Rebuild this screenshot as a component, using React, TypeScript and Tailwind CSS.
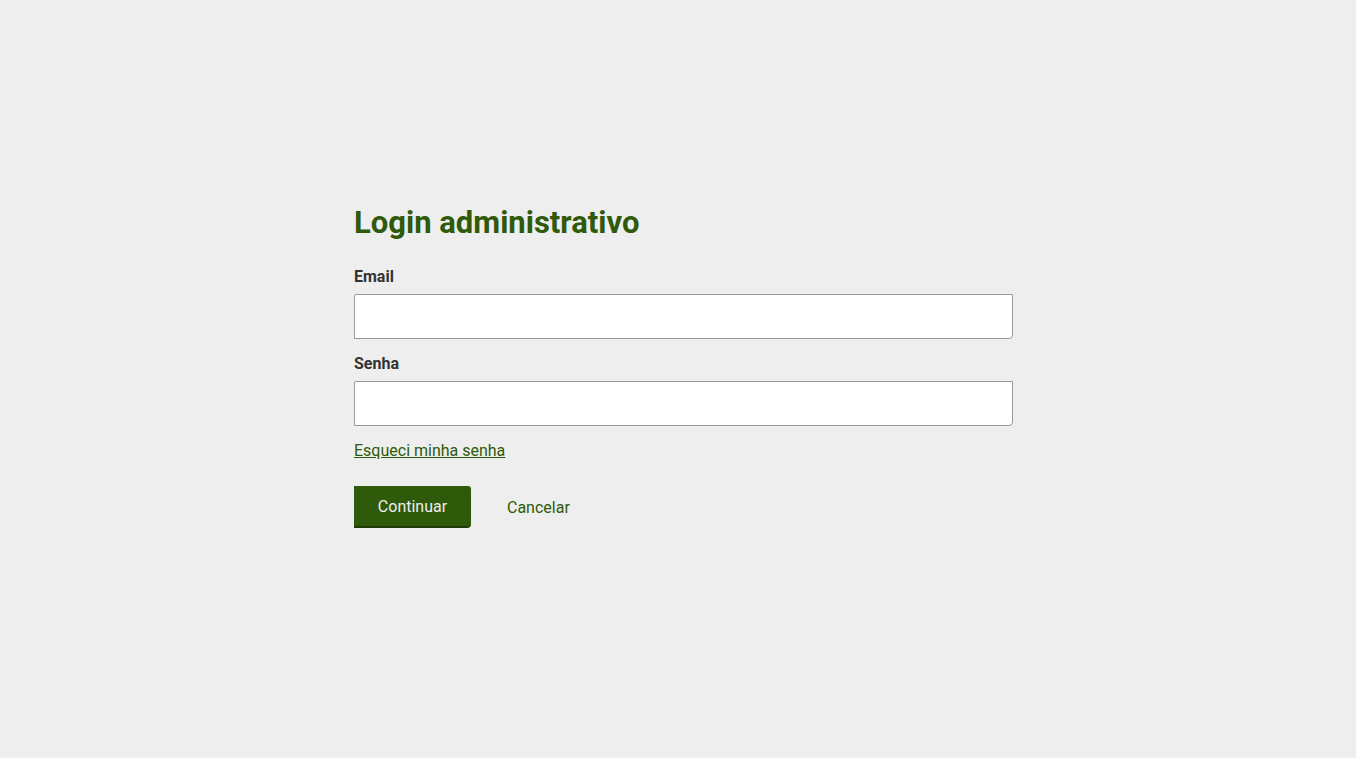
import React, { useState } from 'react';

const App = () => {
  const [email, setEmail] = useState('');
  const [senha, setSenha] = useState('');

  return (
    <div
      className="min-h-[758px] w-full bg-[#eeeeee] pt-[204px] pl-[354px]"
      style={{ fontFamily: 'Roboto, "Liberation Sans", sans-serif' }}
    >
      <form className="w-[659px]" onSubmit={(e) => e.preventDefault()}>
        <h1 className="text-[31px] font-bold leading-[38px] text-[#2f5a0a]">Login administrativo</h1>

        <label className="mt-[23px] block text-[16px] font-bold leading-[24px] text-[#333333]" htmlFor="email">
          Email
        </label>
        <input
          id="email"
          type="email"
          value={email}
          onChange={(e) => setEmail(e.target.value)}
          className="mt-[5px] block h-[45px] w-full rounded-tl-[2px] rounded-br-[4px] border border-[#999999] bg-white px-3 outline-none"
        />

        <label className="mt-[13px] block text-[16px] font-bold leading-[24px] text-[#333333]" htmlFor="senha">
          Senha
        </label>
        <input
          id="senha"
          type="password"
          value={senha}
          onChange={(e) => setSenha(e.target.value)}
          className="mt-[5px] block h-[45px] w-full rounded-tl-[2px] rounded-br-[4px] border border-[#999999] bg-white px-3 outline-none"
        />

        <a href="#" className="mt-[14px] inline-block text-[16px] leading-[22px] text-[#2f5a0a] underline">
          Esqueci minha senha
        </a>

        <div className="mt-[23px] flex items-center">
          <button
            type="submit"
            className="h-[42px] w-[117px] rounded-tr-[3px] rounded-br-[4px] border-b-2 border-[#1f3d05] bg-[#2f5a0a] pt-[2px] text-[16px] text-[#eeeeee]"
          >
            Continuar
          </button>
          <a href="#" className="ml-[36px] mt-[2px] text-[16px] text-[#2f5a0a]">
            Cancelar
          </a>
        </div>
      </form>
    </div>
  );
};

export default App;
